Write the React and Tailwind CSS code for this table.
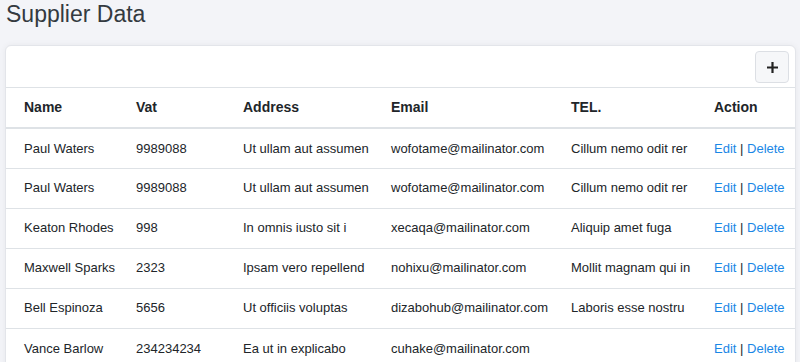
// Supplier list — title, card with add button and table of suppliers.

import React from 'react';

const SUPPLIERS = [
  { name: 'Paul Waters', vat: '9989088', address: 'Ut ullam aut assumen', email: 'wofotame@mailinator.com', tel: 'Cillum nemo odit rer' },
  { name: 'Paul Waters', vat: '9989088', address: 'Ut ullam aut assumen', email: 'wofotame@mailinator.com', tel: 'Cillum nemo odit rer' },
  { name: 'Keaton Rhodes', vat: '998', address: 'In omnis iusto sit i', email: 'xecaqa@mailinator.com', tel: 'Aliquip amet fuga' },
  { name: 'Maxwell Sparks', vat: '2323', address: 'Ipsam vero repellend', email: 'nohixu@mailinator.com', tel: 'Mollit magnam qui in' },
  { name: 'Bell Espinoza', vat: '5656', address: 'Ut officiis voluptas', email: 'dizabohub@mailinator.com', tel: 'Laboris esse nostru' },
  { name: 'Vance Barlow', vat: '234234234', address: 'Ea ut in explicabo', email: 'cuhake@mailinator.com', tel: '' },
];

const COLS = ['Name', 'Vat', 'Address', 'Email', 'TEL.', 'Action'];

export default function App() {
  return (
    <div
      className="min-h-[362px] bg-[#f3f4f8] pl-[5px] pr-[4px] text-[#212529]"
      style={{ fontFamily: '"Liberation Sans", Arial, sans-serif' }}
    >
      <h1 className="text-[23px] leading-[28px] pl-[1px] text-[#343a40] pb-[17px]">Supplier Data</h1>

      <div className="bg-white border border-[#e3e5ea] rounded-[6px] shadow-[0_0_6px_rgba(0,0,0,0.05)] overflow-hidden">
        {/* Toolbar */}
        <div className="h-[42px] flex items-start justify-end pt-[5px] pr-[6px] border-b border-[#dee2e6]">
          <button
            type="button"
            className="w-[34px] h-[32px] flex items-center justify-center rounded-[4px] border border-[#dcdfe4] bg-[#f6f7f9] text-[#222]"
          >
            <svg width="13" height="13" viewBox="0 0 13 13">
              <path d="M6.5 1v11M1 6.5h11" stroke="currentColor" strokeWidth="2.2" />
            </svg>
          </button>
        </div>

        <table className="w-full table-fixed text-[13px]">
          <colgroup>
            <col className="w-[112px]" />
            <col className="w-[107px]" />
            <col className="w-[148px]" />
            <col className="w-[180px]" />
            <col className="w-[143px]" />
            <col />
          </colgroup>
          <thead>
            <tr className="border-b-2 border-[#dee2e6]">
              {COLS.map((c) => (
                <th key={c} className="text-left text-[14px] font-bold pl-[18px] h-[40px] whitespace-nowrap">
                  {c}
                </th>
              ))}
            </tr>
          </thead>
          <tbody>
            {SUPPLIERS.map((s, i) => (
              <tr key={i} className={i < SUPPLIERS.length - 1 ? 'border-b border-[#dee2e6]' : ''}>
                <td className="pl-[18px] h-[40px] whitespace-nowrap">{s.name}</td>
                <td className="pl-[18px] whitespace-nowrap">{s.vat}</td>
                <td className="pl-[18px] whitespace-nowrap">{s.address}</td>
                <td className="pl-[18px] whitespace-nowrap">{s.email}</td>
                <td className="pl-[18px] whitespace-nowrap">{s.tel}</td>
                <td className="pl-[18px] whitespace-nowrap">
                  <a href="#" className="text-[#1a87e6]">Edit</a>
                  <span> | </span>
                  <a href="#" className="text-[#1a87e6]">Delete</a>
                </td>
              </tr>
            ))}
          </tbody>
        </table>
      </div>
    </div>
  );
}
